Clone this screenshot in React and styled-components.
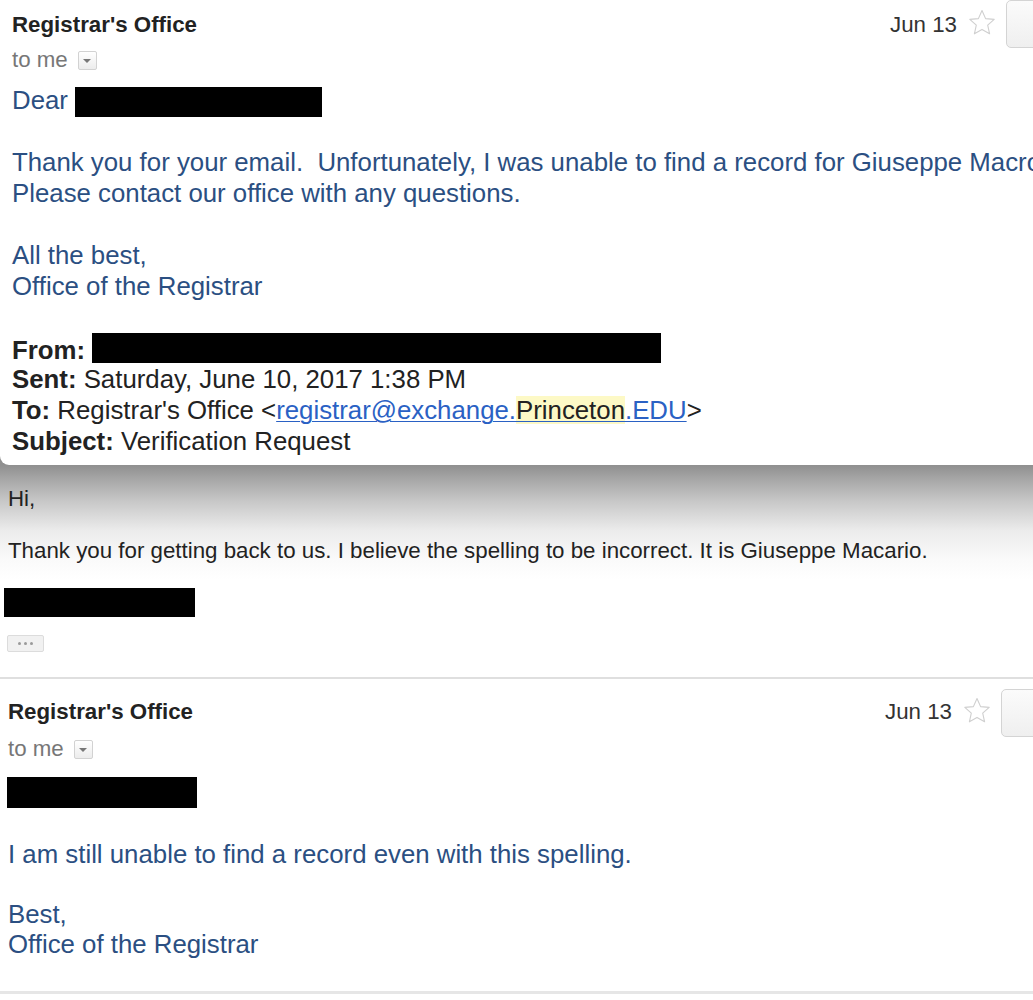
import React from "react"
import styled, { createGlobalStyle } from "styled-components"

const GlobalStyle = createGlobalStyle`
  html, body {
    margin: 0;
    padding: 0;
    background: #fff;
  }
  body {
    font-family: "Liberation Sans", Arial, Helvetica, sans-serif;
    overflow: hidden;
  }
`

const Page = styled.div`
  width: 1033px;
  height: 1000px;
  overflow: hidden;
  background: #fff;
`

// grey behind the rounded corner of the quoted card
const Backdrop = styled.div`
  background: #8f8f8f;
`

const QuotedCard = styled.div`
  height: 465px;
  box-sizing: border-box;
  background: #fff;
  border-bottom-left-radius: 9px;
  padding-left: 12px;
  overflow: hidden;
`

const Header = styled.div`
  display: flex;
  align-items: flex-start;
  padding-top: ${(p) => p.$top}px;
`

const Who = styled.div`
  flex: 1;
  min-width: 0;
`

const Sender = styled.div`
  font-size: 22.3px;
  line-height: 26px;
  font-weight: bold;
  color: #222;
`

const Recipient = styled.div`
  display: flex;
  align-items: center;
  gap: 10px;
  margin-top: ${(p) => p.$gap}px;
  font-size: 22.3px;
  line-height: 26px;
  color: #777;
`

const DropToggle = styled.span`
  width: 17px;
  height: 17px;
  border: 1px solid #d2d2d2;
  border-radius: 2px;
  background: linear-gradient(#fff, #ececec);
  display: inline-flex;
  align-items: center;
  justify-content: center;

  &::after {
    content: "";
    border-left: 4px solid transparent;
    border-right: 4px solid transparent;
    border-top: 4px solid #777;
    margin-top: 1px;
  }
`

const Meta = styled.div`
  display: flex;
  align-items: flex-start;
  margin-right: ${(p) => p.$pull}px;
`

const DateText = styled.span`
  font-size: 22.3px;
  line-height: 26px;
  color: #333;
`

const StarIcon = styled.svg`
  width: 28px;
  height: 27px;
  margin: ${(p) => p.$lift}px 0 0 11px;
  flex-shrink: 0;
`

const ActionButton = styled.div`
  width: 60px;
  height: 48px;
  flex-shrink: 0;
  margin: ${(p) => p.$lift}px 0 0 10px;
  box-sizing: border-box;
  border: 1px solid #d4d4d4;
  border-radius: 5px;
  background: linear-gradient(#fbfbfb, #efefef);
`

const MailBody = styled.div`
  margin-top: ${(p) => p.$gap}px;
  font-size: 25.8px;
  line-height: ${(p) => p.$lh}px;
  color: ${(p) => p.$color || "#2b4f82"};
`

const Line = styled.div`
  white-space: nowrap;
  height: ${(p) => p.$lh}px;
`

const Gap = styled.div`
  height: ${(p) => p.$h}px;
`

const Redacted = styled.span`
  display: ${(p) => (p.$block ? "block" : "inline-block")};
  width: ${(p) => p.$w}px;
  height: ${(p) => p.$h}px;
  background: #000;
  vertical-align: ${(p) => p.$va || 0}px;
  margin-left: ${(p) => p.$ml || 0}px;
`

const Label = styled.b`
  color: #222;
`

const Quoted = styled.div`
  color: #222;
`

const Link = styled.a`
  color: #2a61c4;
  text-decoration: underline;
  text-decoration-thickness: 1px;
  text-underline-offset: 2px;
`

const Highlight = styled.span`
  background: #fdf9c6;
  color: #222;
`

const Thread = styled.div`
  background: linear-gradient(
    #8f8f8f 0px,
    #a8a8a8 15px,
    #c6c6c6 35px,
    #ebebeb 65px,
    #fafafa 95px,
    #fff 115px
  );
`

const Message = styled.div`
  padding: ${(p) => p.$pad};
  border-bottom: ${(p) => p.$rule};
`

const PlainBody = styled.div`
  font-size: 22.3px;
  line-height: 26px;
  color: #222;
`

const Para = styled.p`
  margin: 0 0 ${(p) => p.$after}px;
  white-space: nowrap;
`

const MoreButton = styled.div`
  width: 37px;
  height: 17px;
  margin: 18px 0 0 -1px;
  box-sizing: border-box;
  border: 1px solid #dcdcdc;
  border-radius: 2px;
  background: #f1f1f1;
  display: flex;
  align-items: center;
  justify-content: center;
  gap: 3px;

  span {
    width: 3px;
    height: 3px;
    border-radius: 50%;
    background: #9a9a9a;
  }
`

const Star = ({ lift }) => (
  <StarIcon $lift={lift} viewBox="0 0 28 27">
    <path
      d="M14 1.5l3.6 8.1 8.6.8-6.5 5.8 1.9 8.6L14 20.4l-7.6 4.4 1.9-8.6-6.5-5.8 8.6-.8z"
      fill="#fff"
      stroke="#cfcfcf"
      strokeWidth="1.1"
      strokeLinejoin="round"
    />
  </StarIcon>
)

const MessageHeader = ({ top, gap, pull, starLift, buttonLift }) => (
  <Header $top={top}>
    <Who>
      <Sender>Registrar's Office</Sender>
      <Recipient $gap={gap}>
        to me <DropToggle />
      </Recipient>
    </Who>
    <Meta $pull={pull}>
      <DateText>Jun 13</DateText>
      <Star lift={starLift} />
      <ActionButton $lift={buttonLift} />
    </Meta>
  </Header>
)

const App = () => {
  return (
    <>
      <GlobalStyle />
      <Page>
        <Backdrop>
          <QuotedCard>
            <MessageHeader top={12} gap={9} pull={-33} starLift={-3} buttonLift={-12} />
            <MailBody $gap={12} $lh={31}>
              <Line $lh={31}>
                Dear <Redacted $w={247} $h={30} $va={-8} />
              </Line>
              <Gap $h={31} />
              <Line $lh={31}>
                {"Thank you for your email.\u00a0 Unfortunately, I was unable to find a record for Giuseppe Macro"}
              </Line>
              <Line $lh={31}>Please contact our office with any questions.</Line>
              <Gap $h={31} />
              <Line $lh={31}>All the best,</Line>
              <Line $lh={31}>Office of the Registrar</Line>
              <Gap $h={31} />
              <Quoted>
                <Line $lh={31}>
                  <Label>From:</Label> <Redacted $w={569} $h={30} $va={-4} />
                </Line>
                <Line $lh={31}>
                  <Label>Sent:</Label> Saturday, June 10, 2017 1:38 PM
                </Line>
                <Line $lh={31}>
                  <Label>To:</Label> Registrar's Office &lt;
                  <Link>
                    registrar@exchange.<Highlight>Princeton</Highlight>.EDU
                  </Link>
                  &gt;
                </Line>
                <Line $lh={31}>
                  <Label>Subject:</Label> Verification Request
                </Line>
              </Quoted>
            </MailBody>
          </QuotedCard>
        </Backdrop>

        <Thread>
          <Message $pad="21px 0 25px 8px" $rule="2px solid #dfdfdf">
            <PlainBody>
              <Para $after={26}>Hi,</Para>
              <Para $after={24}>
                Thank you for getting back to us. I believe the spelling to be incorrect. It is Giuseppe Macario.
              </Para>
              <Redacted $block $w={191} $h={29} $ml={-4} />
              <MoreButton>
                <span />
                <span />
                <span />
              </MoreButton>
            </PlainBody>
          </Message>

          <Message $pad="0 0 32px 8px" $rule="3px solid #e6e6e6">
            <MessageHeader top={20} gap={11} pull={-28} starLift={-2} buttonLift={-10} />
            <MailBody $gap={15} $lh={30}>
              <Redacted $block $w={190} $h={31} $ml={-1} />
              <Gap $h={31} />
              <Line $lh={30}>I am still unable to find a record even with this spelling.</Line>
              <Gap $h={30} />
              <Line $lh={30}>Best,</Line>
              <Line $lh={30}>Office of the Registrar</Line>
            </MailBody>
          </Message>
        </Thread>
      </Page>
    </>
  )
}

export default App
